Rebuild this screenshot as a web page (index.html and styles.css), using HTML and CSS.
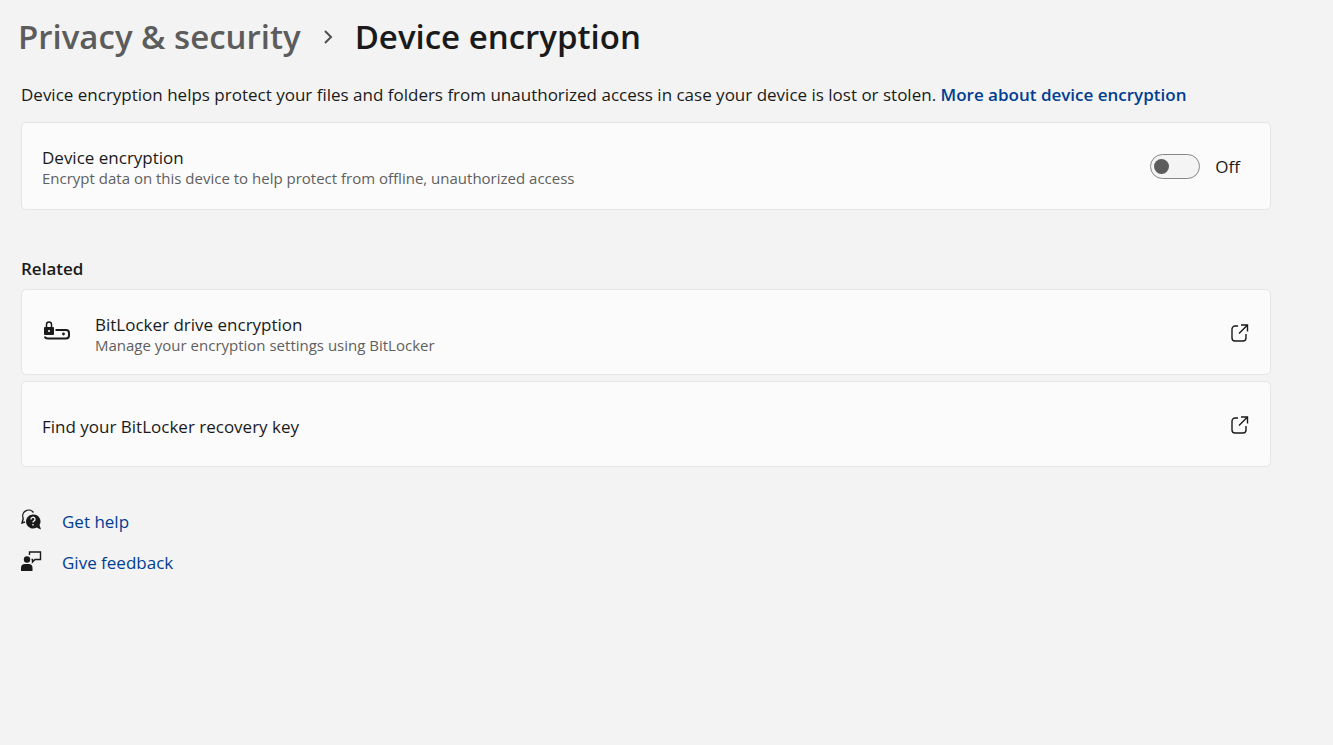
FILE: index.html
```html
<!DOCTYPE html>
<html lang="en">
<head>
<meta charset="utf-8">
<meta name="viewport" content="width=device-width, initial-scale=1">
<title>Device encryption</title>
<link rel="stylesheet" href="styles.css">
</head>
<body>
<main class="page">
  <nav class="crumbs" aria-label="Breadcrumb">
    <a class="crumb" href="#privacy">Privacy &amp; security</a>
    <svg class="chevron" viewBox="0 0 10 16" aria-hidden="true"><path d="M2 2l6 6-6 6"/></svg>
    <h1 class="title">Device encryption</h1>
  </nav>
  <p class="intro">Device encryption helps protect your files and folders from unauthorized access in case your device is lost or stolen. <a class="more" href="#more">More about device encryption</a></p>
  <section class="card card-toggle">
    <div class="text">
      <label class="name" for="enc">Device encryption</label>
      <span class="desc">Encrypt data on this device to help protect from offline, unauthorized access</span>
    </div>
    <input class="switch" id="enc" type="checkbox" role="switch">
    <span class="state">Off</span>
  </section>
  <h2 class="related">Related</h2>
  <div class="list">
    <a class="card" href="#bitlocker">
      <svg class="drive" viewBox="0 0 28 22" aria-hidden="true"><rect class="solid" x="2" y="5" width="10" height="8" rx="1"/><path class="shackle" d="M4.500 5V2.500a2.500 2.500 0 0 1 5 0V5"/><path d="M13.500 8H24a3 3 0 0 1 3 3v2.500a3 3 0 0 1-3 3H6q-3 0-3-2"/><circle class="solid" cx="21.500" cy="12" r="1.400"/><circle class="hole" cx="7" cy="9" r="1.100"/></svg>
      <span class="text"><span class="name">BitLocker drive encryption</span><span class="desc">Manage your encryption settings using BitLocker</span></span>
      <svg class="open" viewBox="0 0 18 18" aria-hidden="true"><path d="M7 2H4a3 3 0 0 0-3 3v9a3 3 0 0 0 3 3h8a3 3 0 0 0 3-3v-4M10 1h6.500v6.500M16.500 1l-8.500 8.500"/></svg>
    </a>
    <a class="card" href="#key">
      <span class="text"><span class="name">Find your BitLocker recovery key</span></span>
      <svg class="open" viewBox="0 0 18 18" aria-hidden="true"><path d="M7 2H4a3 3 0 0 0-3 3v9a3 3 0 0 0 3 3h8a3 3 0 0 0 3-3v-4M10 1h6.500v6.500M16.500 1l-8.500 8.500"/></svg>
    </a>
  </div>
  <div class="support">
    <a class="help" href="#help">
      <svg class="glyph" viewBox="0 0 20 20" aria-hidden="true"><path class="line" d="M12.500 2.500A6 6 0 0 0 2.200 8.500L1 13l3-1"/><path class="solid" d="M12 4.500a7 7 0 1 0 3.500 13l4.500 2-1.500-4.500A7 7 0 0 0 12 4.500z"/><path class="mark" d="M10 9.500a2 2 0 1 1 3 1.500q-1 .5-1 1.500M12 14v1.500"/></svg>
      Get help</a>
    <a class="help" href="#feedback">
      <svg class="glyph" viewBox="0 0 20 20" aria-hidden="true"><circle class="solid" cx="6" cy="8.500" r="3.200"/><path class="solid" d="M0 20v-3a4 4 0 0 1 4-4h3.500a4 4 0 0 1 4 4v3z"/><path class="line" d="M8.500 4V1h11v7.500H14L11.500 11V8.500h-1"/></svg>
      Give feedback</a>
  </div>
</main>
</body>
</html>
```
FILE: styles.css
```css
* { box-sizing: border-box; }
body { margin: 0; background: #f3f3f3; color: #1a1a1a; font: 17px/24px "Segoe UI", "Open Sans", sans-serif; }
.page { padding: 13px 62px 24px 21px; }
a { color: #003e92; text-decoration: none; }
.crumbs { display: flex; align-items: center; gap: 22px; margin-left: -3px; }
.crumb, .title { margin: 0; font-size: 33px; line-height: 48px; font-weight: 600; }
.crumb { color: #5c5c5c; }
.chevron { width: 10px; height: 16px; fill: none; stroke: #4f4f4f; stroke-width: 2; }
.intro { margin: 22px 0 15px; }
.more { font-weight: 600; }
.card { display: flex; align-items: center; min-height: 86px; padding: 2px 21px 0 20px; background: #fbfbfb; border: 1px solid #e5e5e5; border-radius: 5px; color: #1a1a1a; }
.card-toggle { min-height: 88px; padding: 0 30px 0 20px; }
.text { display: flex; flex: 1; flex-direction: column; padding-top: 3px; }
.name { line-height: 21px; }
.desc { font-size: 15px; line-height: 20px; color: #5f5f5f; }
.switch { appearance: none; display: flex; align-items: center; width: 50px; height: 25px; margin: 0 15px 0 0; padding: 0 3px; border: 1px solid #868686; border-radius: 13px; background: #f4f4f4; }
.switch::before { content: ""; width: 15px; height: 15px; border-radius: 50%; background: #5c5c5c; }
.switch:checked { justify-content: flex-end; background: #cfe0f5; }
.state { padding-top: 2px; }
.related { margin: 47px 0 8px; font-size: 17px; line-height: 24px; font-weight: 600; }
.list { display: grid; gap: 6px; }
.open { width: 18px; height: 18px; fill: none; stroke: currentColor; stroke-width: 1.4; }
.drive { width: 28px; height: 22px; margin-right: 25px; fill: none; stroke: currentColor; stroke-width: 2; overflow: visible; }
.shackle { stroke-width: 1.5; }
.solid { fill: currentColor; stroke: none; }
.hole { fill: #fbfbfb; stroke: none; }
.support { display: grid; justify-items: start; gap: 17px; margin-top: 43px; }
.help { display: flex; align-items: flex-start; gap: 21px; }
.glyph { width: 20px; height: 20px; color: #1a1a1a; overflow: visible; }
.line { fill: none; stroke: currentColor; stroke-width: 1.4; }
.mark { fill: none; stroke: #f3f3f3; stroke-width: 1.4; }
```
